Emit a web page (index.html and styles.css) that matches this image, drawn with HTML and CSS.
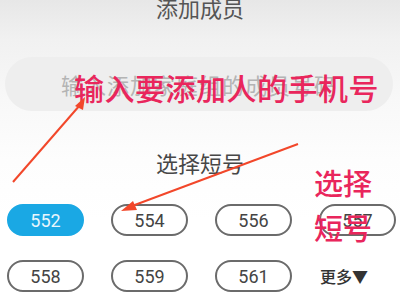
FILE: index.html
```html
<!DOCTYPE html>
<html>
<head>
<meta charset="utf-8">
<link rel="stylesheet" href="styles.css">
</head>
<body>
<div class="page">
  <div class="title">添加成员</div>
  <div class="input">输入添加家庭组的成员号码</div>
  <div class="section">选择短号</div>
  <div class="grid">
    <div class="chip active">552</div>
    <div class="chip">554</div>
    <div class="chip">556</div>
    <div class="chip">557</div>
    <div class="chip">558</div>
    <div class="chip">559</div>
    <div class="chip">561</div>
    <div class="more">更多▼</div>
  </div>

  <div class="note note-phone">输入要添加人的手机号</div>
  <div class="note note-short">选择<br>短号</div>
  <svg class="arrows" width="400" height="300" viewBox="0 0 400 300">
    <line x1="13" y1="182" x2="80" y2="105" stroke="#f2472a" stroke-width="2"/>
    <polygon points="85,97 75,106 83,110" fill="#f2472a"/>
    <line x1="298" y1="144" x2="132" y2="206" stroke="#f2472a" stroke-width="2"/>
    <polygon points="121,211 133,201 137,210" fill="#f2472a"/>
  </svg>
</div>
</body>
</html>
```
FILE: styles.css
```css
html, body {
  margin: 0;
  padding: 0;
}
body {
  width: 400px;
  height: 300px;
  overflow: hidden;
  background: linear-gradient(#e7e7e7 0px, #f1f1f1 40px, #f8f8f8 100px, #fdfdfd 160px, #ffffff 220px);
  font-family: "Noto Sans CJK SC", Roboto, sans-serif;
}
.page {
  position: relative;
  width: 400px;
  height: 300px;
  display: flex;
  flex-direction: column;
}
.title {
  margin-top: -7px;
  height: 28px;
  line-height: 28px;
  font-size: 22px;
  color: #555;
  text-align: center;
}
.input {
  margin: 36px 7px 0 5px;
  height: 54px;
  border-radius: 27px;
  background: #eeeeee;
  color: #b4b4b4;
  font-size: 22px;
  line-height: 54px;
  text-align: center;
  letter-spacing: 1px;
}
.section {
  margin-top: 36px;
  height: 30px;
  line-height: 30px;
  font-size: 22px;
  color: #474747;
  text-align: center;
}
.grid {
  margin: 27px 7px 0 7px;
  display: grid;
  grid-template-columns: repeat(4, 77px);
  column-gap: 27px;
  row-gap: 24px;
}
.chip {
  box-sizing: border-box;
  height: 32px;
  border: 2.5px solid #6b6b6b;
  border-radius: 16px;
  font-family: Roboto, "Noto Sans", sans-serif;
  font-size: 18px;
  color: #444;
  display: flex;
  align-items: center;
  justify-content: center;
  background: #fff;
}
.chip.active {
  background: #1aa8e4;
  border-color: #1aa8e4;
  color: #e8f6fd;
}
.more {
  display: flex;
  align-items: center;
  padding-left: 1px;
  font-size: 16px;
  font-weight: 500;
  color: #333;
}
.note {
  position: absolute;
  color: #e9265c;
  font-weight: 500;
  font-family: "Noto Sans CJK SC", sans-serif;
}
.note-phone {
  left: 74px;
  top: 67px;
  font-size: 30px;
  line-height: 40px;
  letter-spacing: 0.5px;
}
.note-short {
  left: 314px;
  top: 160px;
  font-size: 29px;
  line-height: 45px;
}
.arrows {
  position: absolute;
  left: 0;
  top: 0;
}
```
